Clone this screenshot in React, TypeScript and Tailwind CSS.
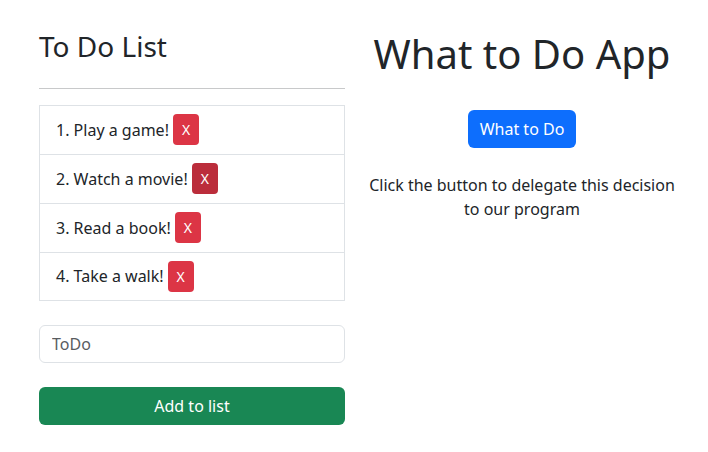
import React from "react";

const items = [
  { text: "1. Play a game!", hover: false, h: "h-[49px]" },
  { text: "2. Watch a movie!", hover: true, h: "h-[49px]" },
  { text: "3. Read a book!", hover: false, h: "h-[49px]" },
  { text: "4. Take a walk!", hover: false, h: "h-[48px]" },
];

export default function App() {
  return (
    <div
      className="min-h-[452px] w-[708px] bg-white text-[#212529]"
      style={{ fontFamily: '"Noto Sans", sans-serif' }}
    >
      <div className="flex gap-6 px-[39px]">
        <div className="w-[306px] shrink-0 pt-[30px]">
          <h2 className="text-[28px] leading-[1.2] font-normal">To Do List</h2>
          <hr className="mt-6 border-0 border-t border-[#c8c9ca]" />
          <ul className="mt-4 border-x border-b border-[#dee2e6]">
            {items.map((it, i) => (
              <li
                key={i}
                className={
                  "flex items-center border-t border-[#dee2e6] px-4 text-[16px] leading-6 " + it.h
                }
              >
                <span>{it.text}</span>
                <button
                  className={
                    "ml-1 h-[31px] rounded-[4px] px-[9px] text-[14px] leading-[21px] text-white " +
                    (it.hover ? "bg-[#bb2d3b]" : "bg-[#dc3545]")
                  }
                >
                  X
                </button>
              </li>
            ))}
          </ul>
          <input
            className="mt-6 block h-[38px] w-full rounded-[6px] border border-[#dee2e6] px-3 text-[16px] leading-6 placeholder:text-[#595c5f]"
            placeholder="ToDo"
          />
          <button className="mt-6 block h-[38px] w-full rounded-[6px] bg-[#198754] text-[16px] leading-6 text-white">
            Add to list
          </button>
        </div>
        <div className="flex w-[306px] shrink-0 flex-col items-center pt-[30px] text-center">
          <h1 className="text-[40px] leading-[1.2] font-normal whitespace-nowrap">What to Do App</h1>
          <button className="mt-[32px] h-[38px] rounded-[6px] bg-[#0d6efd] px-3 text-[16px] leading-6 text-white">
            What to Do
          </button>
          <p className="mt-[25px] text-[16px] leading-6">
            Click the button to delegate this decision to our program
          </p>
        </div>
      </div>
    </div>
  );
}
